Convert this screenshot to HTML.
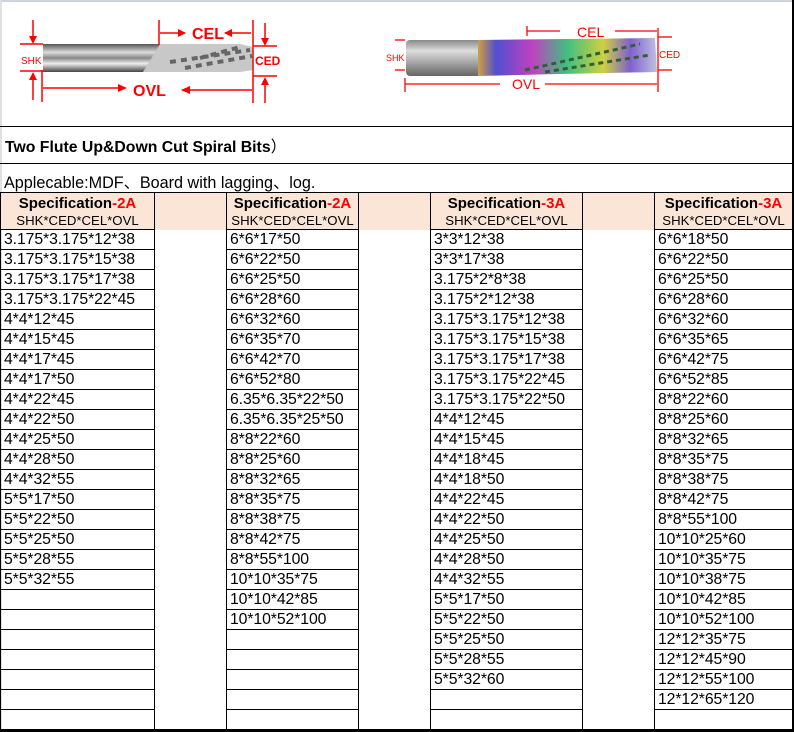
<!DOCTYPE html>
<html><head><meta charset="utf-8"><style>
*{margin:0;padding:0;box-sizing:border-box}
body{width:794px;height:732px;position:relative;background:#fff;font-family:"Liberation Sans",Arial,sans-serif;overflow:hidden;color:#000}
.a{position:absolute}
.col{position:absolute;top:230px;height:500px;border-left:1px solid #000;border-right:1px solid #000;
background:repeating-linear-gradient(to bottom,transparent 0,transparent 19px,#000 19px,#000 20px);
font-size:15.8px;line-height:20px;padding-left:3px;white-space:pre;color:#000;letter-spacing:-0.1px}
.hd{position:absolute;top:193px;height:37px;background:#fbe5d6;border-left:1px solid #000;border-right:1px solid #000;text-align:center}
.hd b{display:block;font-size:15px;line-height:18px;margin-top:2px}
.hd b span{color:#f00}
.hd i{display:block;font-style:normal;font-size:13.2px;line-height:16px}
.gap{position:absolute;top:193px;height:37px;background:#fbe5d6}
</style></head><body>
<div class="a" style="left:0;top:0;width:794px;height:2px;background:#d0d4dc"></div>
<div class="a" style="left:792px;top:0;width:2px;height:732px;background:#000"></div>
<div class="a" style="left:0;top:0;width:2px;height:732px;background:#e0e0e0"></div>

<svg class="a" style="left:0;top:0" width="794" height="126">
<defs>
<linearGradient id="sh" x1="0" y1="0" x2="0" y2="1">
<stop offset="0" stop-color="#555"/><stop offset=".3" stop-color="#ddd"/><stop offset=".5" stop-color="#888"/><stop offset=".7" stop-color="#eee"/><stop offset="1" stop-color="#444"/></linearGradient>
<linearGradient id="rb" x1="0" y1="0" x2="1" y2="0">
<stop offset="0" stop-color="#d0a040"/><stop offset=".1" stop-color="#5050d0"/><stop offset=".3" stop-color="#c040c0"/><stop offset=".5" stop-color="#40c080"/><stop offset=".7" stop-color="#d0d040"/><stop offset=".85" stop-color="#8060d0"/><stop offset="1" stop-color="#c0c0e0"/></linearGradient>
<linearGradient id="sh2" x1="0" y1="0" x2="0" y2="1">
<stop offset="0" stop-color="#888"/><stop offset=".3" stop-color="#ddd"/><stop offset=".6" stop-color="#aaa"/><stop offset="1" stop-color="#666"/></linearGradient>
</defs>
<rect x="43" y="44" width="118" height="28" fill="url(#sh)"/>
<path d="M160 44 L240 44 L253 47 L253 70 L240 72 L143 72 Z" fill="#c8c8c8"/>
<path d="M170 62 L250 50 M185 68 L252 56 M200 58 L240 47" stroke="#666" stroke-width="4" stroke-dasharray="6 5"/>
<g stroke="#f00" stroke-width="1.5" fill="none">
<line x1="42" y1="70" x2="42" y2="102"/><line x1="159" y1="20" x2="159" y2="45"/><line x1="253" y1="20" x2="253" y2="103"/>
<line x1="20" y1="44" x2="43" y2="44"/><line x1="20" y1="71" x2="43" y2="71"/>
<line x1="253" y1="46" x2="277" y2="46"/><line x1="253" y1="76" x2="277" y2="76"/>
<line x1="33" y1="20" x2="33" y2="42"/><line x1="33" y1="74" x2="33" y2="100"/>
<line x1="265" y1="23" x2="265" y2="44"/><line x1="265" y1="79" x2="265" y2="103"/>
<line x1="160" y1="33" x2="185" y2="33"/><line x1="225" y1="33" x2="251" y2="33"/>
<line x1="43" y1="88" x2="125" y2="88"/><line x1="182" y1="90" x2="252" y2="90"/>
</g>
<g fill="#f00">
<path d="M29 36 L37 36 L33 44Z"/><path d="M29 80 L37 80 L33 72Z"/><path d="M261 38 L269 38 L265 46Z"/><path d="M261 85 L269 85 L265 77Z"/>
<path d="M178 29 L186 33 L178 37Z"/><path d="M232 29 L224 33 L232 37Z"/><path d="M118 84 L127 88 L118 92Z"/><path d="M190 86 L181 90 L190 94Z"/>
<text x="21" y="64" font-size="10" font-family="Liberation Sans">SHK</text>
<text x="192" y="39" font-size="16" font-weight="bold" font-family="Liberation Sans">CEL</text>
<text x="255" y="65" font-size="12" font-weight="bold" font-family="Liberation Sans">CED</text>
<text x="133" y="96" font-size="16" font-weight="bold" font-family="Liberation Sans">OVL</text>
</g>
<rect x="406" y="40" width="75" height="36" rx="4" fill="url(#sh2)"/>
<path d="M478 40 L655 38 L657 72 L560 74 L478 76Z" fill="url(#rb)"/>
<path d="M525 70 L640 44 M545 72 L650 55" stroke="#306030" stroke-width="3" stroke-dasharray="5 4"/>
<g stroke="#f00" stroke-width="1.3">
<line x1="405" y1="78" x2="405" y2="92"/><line x1="658" y1="28" x2="658" y2="92"/><line x1="527" y1="26" x2="527" y2="36"/>
<line x1="527" y1="31" x2="560" y2="31"/><line x1="615" y1="31" x2="657" y2="31"/>
<line x1="405" y1="84" x2="500" y2="84"/><line x1="545" y1="84" x2="657" y2="84"/>
<line x1="658" y1="37" x2="672" y2="37"/><line x1="658" y1="70" x2="672" y2="70"/>
<line x1="395" y1="40" x2="405" y2="40"/><line x1="395" y1="70" x2="405" y2="70"/>
</g>
<g fill="#f00" font-family="Liberation Sans">
<text x="577" y="37" font-size="14">CEL</text>
<text x="659" y="58" font-size="10">CED</text>
<text x="512" y="89" font-size="14">OVL</text>
<text x="386" y="61" font-size="9">SHK</text>
</g>
</svg>

<div class="a" style="left:0;top:126px;width:794px;height:1px;background:#000"></div>
<div class="a" style="left:5px;top:134px;font-size:15.8px;font-weight:bold;font-family:'Liberation Sans','Noto Sans CJK SC',sans-serif">Two Flute Up&amp;Down Cut Spiral Bits<span style="font-weight:normal">）</span></div>
<div class="a" style="left:0;top:163px;width:794px;height:1px;background:#000"></div>
<div class="a" style="left:4px;top:169px;font-size:16.2px;font-family:'Liberation Sans','Noto Sans CJK SC',sans-serif">Applecable:MDF、Board with lagging、log.</div>
<div class="a" style="left:0;top:192px;width:794px;height:1px;background:#000"></div>

<div class="gap" style="left:154px;width:73px"></div>
<div class="gap" style="left:358px;width:73px"></div>
<div class="gap" style="left:582px;width:73px"></div>
<div class="hd" style="left:0;width:155px"><b>Specification<span>-2A</span></b><i>SHK*CED*CEL*OVL</i></div>
<div class="hd" style="left:226px;width:133px"><b>Specification<span>-2A</span></b><i>SHK*CED*CEL*OVL</i></div>
<div class="hd" style="left:430px;width:153px"><b>Specification<span>-3A</span></b><i>SHK*CED*CEL*OVL</i></div>
<div class="hd" style="left:654px;width:139px"><b>Specification<span>-3A</span></b><i>SHK*CED*CEL*OVL</i></div>
<div class="a" style="left:0;top:229px;width:155px;height:1px;background:#000"></div>
<div class="a" style="left:226px;top:229px;width:133px;height:1px;background:#000"></div>
<div class="a" style="left:430px;top:229px;width:153px;height:1px;background:#000"></div>
<div class="a" style="left:654px;top:229px;width:139px;height:1px;background:#000"></div>

<div class="col" style="left:0;width:155px">3.175*3.175*12*38
3.175*3.175*15*38
3.175*3.175*17*38
3.175*3.175*22*45
4*4*12*45
4*4*15*45
4*4*17*45
4*4*17*50
4*4*22*45
4*4*22*50
4*4*25*50
4*4*28*50
4*4*32*55
5*5*17*50
5*5*22*50
5*5*25*50
5*5*28*55
5*5*32*55</div>
<div class="col" style="left:226px;width:133px">6*6*17*50
6*6*22*50
6*6*25*50
6*6*28*60
6*6*32*60
6*6*35*70
6*6*42*70
6*6*52*80
6.35*6.35*22*50
6.35*6.35*25*50
8*8*22*60
8*8*25*60
8*8*32*65
8*8*35*75
8*8*38*75
8*8*42*75
8*8*55*100
10*10*35*75
10*10*42*85
10*10*52*100</div>
<div class="col" style="left:430px;width:153px">3*3*12*38
3*3*17*38
3.175*2*8*38
3.175*2*12*38
3.175*3.175*12*38
3.175*3.175*15*38
3.175*3.175*17*38
3.175*3.175*22*45
3.175*3.175*22*50
4*4*12*45
4*4*15*45
4*4*18*45
4*4*18*50
4*4*22*45
4*4*22*50
4*4*25*50
4*4*28*50
4*4*32*55
5*5*17*50
5*5*22*50
5*5*25*50
5*5*28*55
5*5*32*60</div>
<div class="col" style="left:654px;width:139px">6*6*18*50
6*6*22*50
6*6*25*50
6*6*28*60
6*6*32*60
6*6*35*65
6*6*42*75
6*6*52*85
8*8*22*60
8*8*25*60
8*8*32*65
8*8*35*75
8*8*38*75
8*8*42*75
8*8*55*100
10*10*25*60
10*10*35*75
10*10*38*75
10*10*42*85
10*10*52*100
12*12*35*75
12*12*45*90
12*12*55*100
12*12*65*120</div>
<div class="a" style="left:0;top:729px;width:794px;height:3px;background:#000"></div>
</body></html>
